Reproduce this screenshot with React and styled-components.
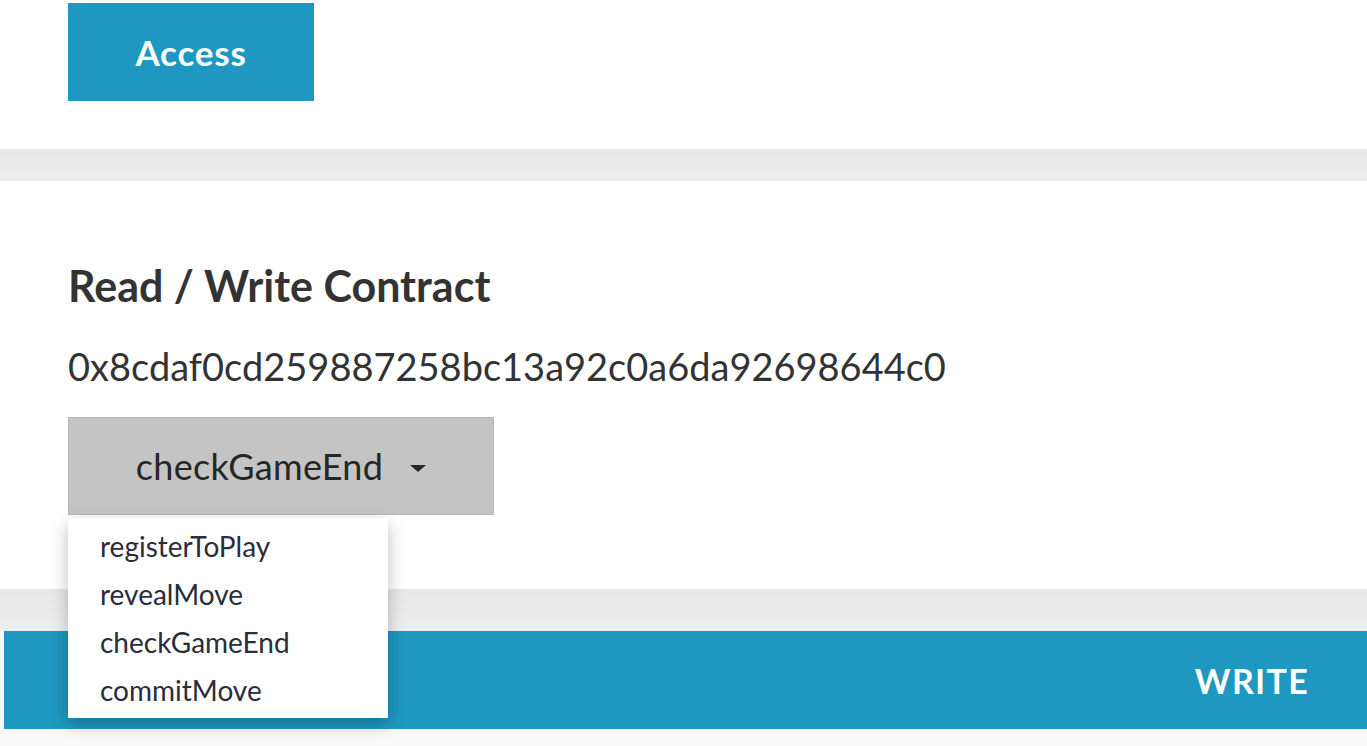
import React, { useState } from "react";
import styled, { createGlobalStyle } from "styled-components";

const methods = ["registerToPlay", "revealMove", "checkGameEnd", "commitMove"];

const GlobalStyle = createGlobalStyle`
  body {
    margin: 0;
    background: #f9f9f9;
    font-family: Lato, "Open Sans", sans-serif;
    color: #333;
  }
`;

const App = () => {
  const [selected] = useState("checkGameEnd");

  return (
    <Page>
      <GlobalStyle />
      <TopCard>
        <AccessButton>Access</AccessButton>
      </TopCard>
      <Band />
      <ContractCard>
        <Heading>Read / Write Contract</Heading>
        <Address>0x8cdaf0cd259887258bc13a92c0a6da92698644c0</Address>
        <SelectWrap>
          <SelectButton>
            {selected}
            <Caret />
          </SelectButton>
          <Menu>
            {methods.map((m) => (
              <MenuItem key={m}>{m}</MenuItem>
            ))}
          </Menu>
        </SelectWrap>
      </ContractCard>
      <Band $tall />
      <WriteBar>
        <WriteLabel>WRITE</WriteLabel>
      </WriteBar>
    </Page>
  );
};

export default App;

const Page = styled.div`
  display: flex;
  flex-direction: column;
  min-height: 746px;
  background: #f9f9f9;
`;

const TopCard = styled.div`
  background: #fff;
  height: 149px;
  padding: 3px 68px 0;
  box-sizing: border-box;
`;

const AccessButton = styled.button`
  width: 246px;
  height: 98px;
  border: none;
  background: #1e98c0;
  color: #fff;
  font-family: Lato, sans-serif;
  font-weight: 700;
  font-size: 35px;
  letter-spacing: 0.8px;
  padding: 0;
`;

const Band = styled.div`
  height: ${(p) => (p.$tall ? "42px" : "32px")};
  background: linear-gradient(to bottom, #e8e8e8, #eeeeee);
`;

const ContractCard = styled.div`
  background: #fff;
  height: 408px;
  padding: 80px 68px 0;
  box-sizing: border-box;
`;

const Heading = styled.h2`
  margin: 0;
  font-size: 43px;
  font-weight: 700;
  line-height: 50px;
  color: #333;
`;

const Address = styled.div`
  margin-top: 33px;
  font-size: 38px;
  line-height: 44px;
  color: #333;
`;

const SelectWrap = styled.div`
  position: relative;
  margin-top: 29px;
  width: 426px;
`;

const SelectButton = styled.div`
  display: flex;
  align-items: center;
  justify-content: center;
  gap: 27px;
  height: 98px;
  box-sizing: border-box;
  background: #c4c4c4;
  border: 1px solid #b5b5b5;
  font-size: 36px;
  letter-spacing: 0.3px;
  color: #262626;
`;

const Caret = styled.span`
  width: 0;
  height: 0;
  border-left: 8px solid transparent;
  border-right: 8px solid transparent;
  border-top: 7px solid #262626;
  margin-top: 4px;
`;

const Menu = styled.ul`
  position: absolute;
  top: 101px;
  left: 0;
  width: 320px;
  margin: 0;
  padding: 4px 0 4px;
  list-style: none;
  background: #fff;
  box-shadow: 0 6px 16px rgba(0, 0, 0, 0.25);
  z-index: 2;
`;

const MenuItem = styled.li`
  height: 48px;
  line-height: 48px;
  padding-left: 32px;
  font-size: 28px;
  color: #2a2d3a;
`;

const WriteBar = styled.div`
  margin-left: 4px;
  height: 98px;
  background: #1e98c0;
  display: flex;
  align-items: center;
  justify-content: flex-end;
  padding-right: 58px;
`;

const WriteLabel = styled.span`
  color: #fff;
  font-weight: 700;
  font-size: 34px;
  letter-spacing: 1.3px;
`;
